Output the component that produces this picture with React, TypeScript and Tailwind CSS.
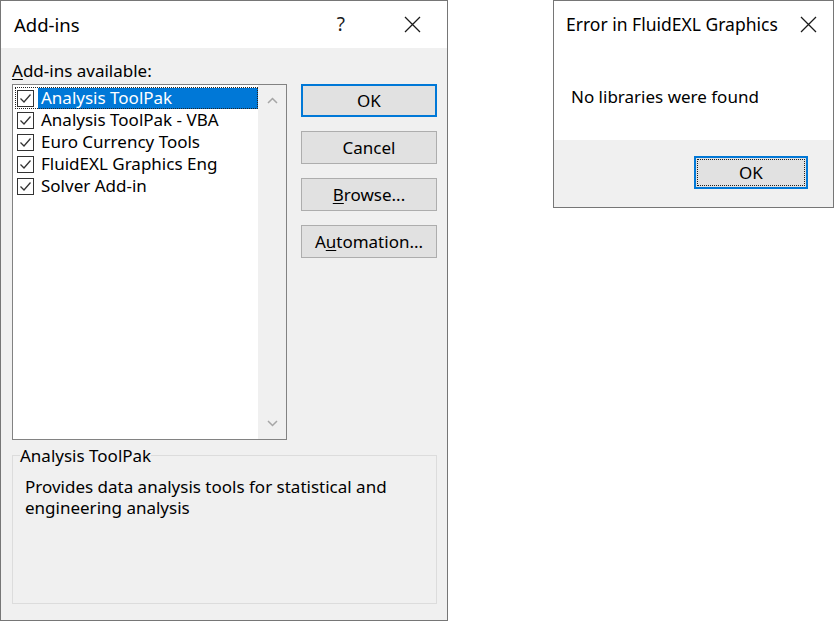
import React from 'react';

const FONT = '"Noto Sans", "Open Sans", sans-serif';

const ITEMS = [
  'Analysis ToolPak',
  'Analysis ToolPak - VBA',
  'Euro Currency Tools',
  'FluidEXL Graphics Eng',
  'Solver Add-in',
];

function CloseIcon() {
  return (
    <svg width="17" height="17" viewBox="0 0 17 17">
      <path d="M1 1 L16 16 M16 1 L1 16" stroke="#1a1a1a" strokeWidth="1.3" fill="none" />
    </svg>
  );
}

function CheckBox() {
  return (
    <div className="w-[17px] h-[17px] border border-[#333333] bg-white flex items-center justify-center shrink-0">
      <svg width="13" height="13" viewBox="0 0 13 13">
        <path d="M1.5 6.5 L5 10 L11.5 2.5" stroke="#333333" strokeWidth="1.3" fill="none" />
      </svg>
    </div>
  );
}

function Chevron({ up }: { up?: boolean }) {
  return (
    <svg width="11" height="7" viewBox="0 0 11 7">
      <path
        d={up ? 'M1 6 L5.5 1.5 L10 6' : 'M1 1 L5.5 5.5 L10 1'}
        stroke="#a6a6a6"
        strokeWidth="1.5"
        fill="none"
      />
    </svg>
  );
}

function Button({ children, primary }: { children: React.ReactNode; primary?: boolean }) {
  return (
    <div
      className={`h-[33px] flex items-center justify-center bg-[#e1e1e1] text-[17px] text-black ${
        primary ? 'border-2 border-[#0078d7]' : 'border border-[#adadad]'
      }`}
    >
      {children}
    </div>
  );
}

function AddInsDialog() {
  return (
    <div className="w-[448px] h-[621px] border border-[#767676] flex flex-col bg-[#f0f0f0]">
      {/* title bar */}
      <div className="h-[47px] bg-white flex items-center shrink-0">
        <span className="ml-[13px] text-[18.5px] text-black flex-1">Add-ins</span>
        <span className="text-[19px] text-[#1a1a1a] mr-[59px]">?</span>
        <div className="mr-[26px] flex items-center">
          <CloseIcon />
        </div>
      </div>

      <div className="flex flex-col pl-[11px] pr-[10px]">
        <div className="mt-[12px] h-[24px] text-[17px] leading-[22px] text-black">
          <span className="underline underline-offset-2">A</span>dd-ins available:
        </div>

        <div className="flex">
          {/* list box */}
          <div className="w-[275px] h-[356px] border border-[#828282] bg-white flex">
            <div className="flex-1 pt-[2px] pl-[2px]">
              {ITEMS.map((item, i) => (
                <div
                  key={item}
                  className={`h-[22px] flex items-center ${
                    i === 0 ? 'outline outline-1 outline-dotted outline-[#222] -outline-offset-1' : ''
                  }`}
                >
                  <div className="ml-[2px]">
                    <CheckBox />
                  </div>
                  <div
                    className={`ml-[4px] h-[21px] flex items-center pl-[3px] text-[17px] ${
                      i === 0 ? 'bg-[#0078d7] text-white flex-1' : 'text-black'
                    }`}
                  >
                    {item}
                  </div>
                </div>
              ))}
            </div>
            <div className="w-[28px] bg-[#f0f0f0] flex flex-col items-center justify-between py-[12px]">
              <Chevron up />
              <Chevron />
            </div>
          </div>

          {/* buttons */}
          <div className="ml-[14px] w-[136px] flex flex-col gap-[14px]">
            <Button primary>OK</Button>
            <Button>Cancel</Button>
            <Button>
              <span className="underline underline-offset-2">B</span>rowse...
            </Button>
            <Button>
              A<span className="underline underline-offset-2">u</span>tomation...
            </Button>
          </div>
        </div>

        {/* group box */}
        <div className="mt-[15px] w-[425px] h-[149px] border border-[#dcdcdc] relative">
          <span className="absolute -top-[11px] left-[7px] bg-[#f0f0f0] text-[17px] leading-[22px] text-black">
            Analysis ToolPak
          </span>
          <div className="mt-[20px] ml-[12px] flex flex-col text-[17px] leading-[21px] text-black">
            <span>Provides data analysis tools for statistical and</span>
            <span>engineering analysis</span>
          </div>
        </div>
      </div>
    </div>
  );
}

function ErrorDialog() {
  return (
    <div className="ml-[105px] w-[281px] h-[208px] border border-[#767676] flex flex-col bg-white">
      <div className="h-[47px] flex items-center shrink-0">
        <span className="ml-[12px] text-[17.5px] text-black flex-1">Error in FluidEXL Graphics</span>
        <div className="mr-[16px] flex items-center">
          <CloseIcon />
        </div>
      </div>
      <div className="h-[92px] flex items-center">
        <span className="ml-[17px] mt-[5px] text-[17px] text-black">No libraries were found</span>
      </div>
      <div className="flex-1 bg-[#f0f0f0] flex justify-end items-start">
        <div className="mt-[16px] mr-[25px] w-[114px] h-[33px] border-2 border-[#0078d7] bg-[#e1e1e1] p-[1px]">
          <div className="w-full h-full outline outline-1 outline-dotted outline-[#222] -outline-offset-1 flex items-center justify-center text-[17px] text-black">
            OK
          </div>
        </div>
      </div>
    </div>
  );
}

export default function App() {
  return (
    <div className="w-[835px] h-[622px] bg-white flex items-start" style={{ fontFamily: FONT }}>
      <AddInsDialog />
      <ErrorDialog />
    </div>
  );
}
